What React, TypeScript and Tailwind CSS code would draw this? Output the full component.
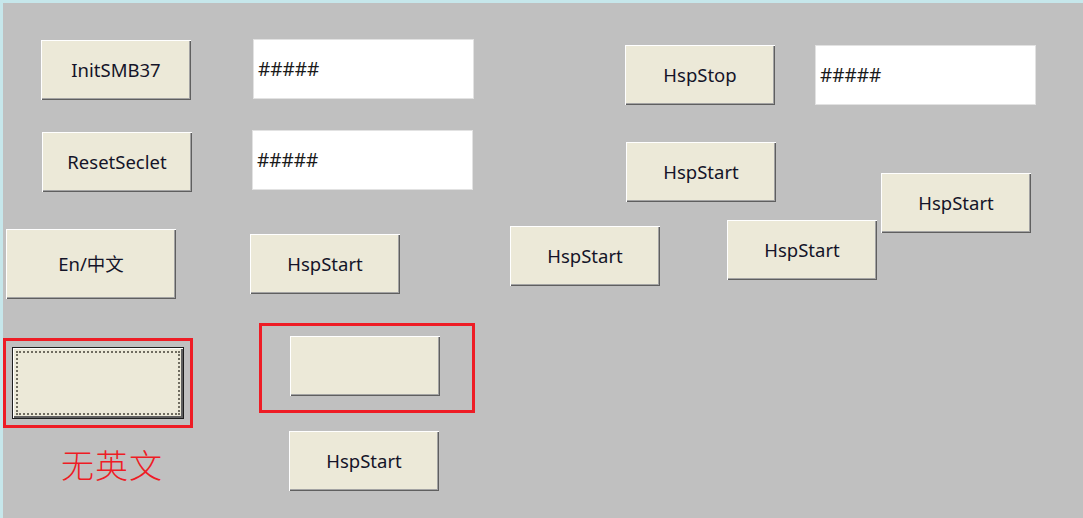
const btn =
  "absolute flex items-center justify-center bg-[#ece9d8] text-[18.5px] text-[#141428] shadow-[inset_1px_1px_0_#ffffff,inset_-1px_-1px_0_#5f5f5f,inset_-2px_-2px_0_#a3a3a3]";

const buttons = [
  { label: "InitSMB37", pos: "left-[38px] top-[37px] w-[150px] h-[60px]" },
  { label: "ResetSeclet", pos: "left-[39px] top-[129px] w-[150px] h-[60px]" },
  { label: "En/中文", pos: "left-[3px] top-[226px] w-[170px] h-[70px]" },
  { label: "HspStart", pos: "left-[247px] top-[231px] w-[150px] h-[60px]" },
  { label: "", pos: "left-[287px] top-[333px] w-[150px] h-[60px]" },
  { label: "HspStart", pos: "left-[286px] top-[428px] w-[150px] h-[60px]" },
  { label: "HspStop", pos: "left-[622px] top-[42px] w-[150px] h-[60px]" },
  { label: "HspStart", pos: "left-[623px] top-[139px] w-[150px] h-[60px]" },
  { label: "HspStart", pos: "left-[507px] top-[223px] w-[150px] h-[60px]" },
  { label: "HspStart", pos: "left-[724px] top-[217px] w-[150px] h-[60px]" },
  { label: "HspStart", pos: "left-[878px] top-[170px] w-[150px] h-[60px]" },
];

const boxes = [
  "left-[250px] top-[36px]",
  "left-[249px] top-[127px]",
  "left-[812px] top-[42px]",
];

export default function App() {
  return (
    <div
      className="relative w-[1083px] h-[518px] overflow-hidden bg-[#c0c0c0] border-t-[3px] border-l-[3px] border-[#c6e7eb]"
      style={{ fontFamily: '"Noto Sans", "Noto Sans CJK SC", sans-serif' }}
    >
      {boxes.map((pos, i) => (
        <div
          key={i}
          className={
            "absolute w-[221px] h-[60px] bg-white border border-[#e2e2e2] flex items-center pl-[4px] text-[19px] leading-none text-[#1a1a1a]"
          + " " + pos}
        >
          #####
        </div>
      ))}

      {buttons.map((b, i) => (
        <div key={i} className={btn + " " + b.pos}>
          {b.label}
        </div>
      ))}

      {/* focused, no english */}
      <div className="absolute left-0 top-[335px] w-[190px] h-[90px] border-[3px] border-[#ee1c25]" />
      <div className="absolute left-[9px] top-[344px] w-[172px] h-[72px] border border-[#1e1e1e] bg-[#ece9d8] p-[3px] shadow-[inset_1px_1px_0_#ffffff,inset_-2px_-2px_0_#5f5f5f]">
        <div className="w-full h-full border-2 border-dotted border-[#6f6c60]" />
      </div>
      <div
        className="absolute left-[58px] top-[437px] text-[33px] text-[#ee1c25] tracking-[1px]"
        style={{ fontFamily: '"Noto Sans CJK SC", serif', fontWeight: 300 }}
      >
        无英文
      </div>

      <div className="absolute left-[256px] top-[320px] w-[216px] h-[90px] border-[3px] border-[#ee1c25]" />
    </div>
  );
}
